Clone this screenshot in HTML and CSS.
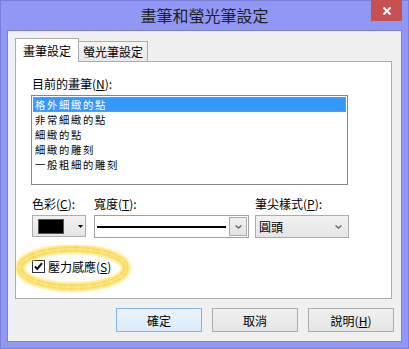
FILE: index.html
```html
<!DOCTYPE html>
<html lang="zh-TW">
<head>
  <meta charset="UTF-8">
  <title>畫筆和螢光筆設定</title>
  <link rel="stylesheet" href="styles.css">
</head>
<body>

  <div class="window">
    <div class="titlebar">
      <div class="title">畫筆和螢光筆設定</div>
      <div class="close">
        <svg width="10" height="8" viewBox="0 0 10 8">
          <path d="M1.5 0.5 L8.5 7.5 M8.5 0.5 L1.5 7.5" stroke="#fff" stroke-width="2"/>
        </svg>
      </div>
    </div>

    <div class="client">
      <div class="tabs">
        <div class="tab active">畫筆設定</div>
        <div class="tab">螢光筆設定</div>
      </div>

      <div class="pane">
        <div class="label">目前的畫筆(<u>N</u>):</div>
        <ul class="listbox">
          <li class="selected">格外細緻的點</li>
          <li>非常細緻的點</li>
          <li>細緻的點</li>
          <li>細緻的雕刻</li>
          <li>一般粗細的雕刻</li>
        </ul>

        <div class="options">
          <div class="field field-color">
            <div class="label">色彩(<u>C</u>):</div>
            <div class="color-btn">
              <span class="swatch"></span>
              <svg class="tri" width="5" height="3" viewBox="0 0 5 3"><path d="M0 0 H5 L2.5 3 Z" fill="#000"/></svg>
            </div>
          </div>
          <div class="field field-width">
            <div class="label">寬度(<u>T</u>):</div>
            <div class="combo">
              <div class="combo-value"><span class="line"></span></div>
              <div class="drop">
                <svg width="7" height="4" viewBox="0 0 7 4"><path d="M0.5 0.5 L3.5 3 L6.5 0.5" fill="none" stroke="#666" stroke-width="1.4"/></svg>
              </div>
            </div>
          </div>
          <div class="field field-tip">
            <div class="label">筆尖樣式(<u>P</u>):</div>
            <div class="select">
              <span>圓頭</span>
              <svg width="7" height="4" viewBox="0 0 7 4"><path d="M0.5 0.5 L3.5 3 L6.5 0.5" fill="none" stroke="#666" stroke-width="1.4"/></svg>
            </div>
          </div>
        </div>

        <div class="check">
          <span class="box">
            <svg width="11" height="11" viewBox="0 0 11 11"><path d="M2 5.5 L4.3 8 L9 2.2" fill="none" stroke="#111" stroke-width="2"/></svg>
          </span>
          <span>壓力感應(<u>S</u>)</span>
        </div>

        <!-- marca de marca-texto por cima -->
        <svg class="highlight" width="120" height="50" viewBox="0 0 120 50">
          <defs>
            <filter id="fuzz" x="-10%" y="-20%" width="120%" height="140%">
              <feGaussianBlur stdDeviation="1.2"/>
            </filter>
          </defs>
          <ellipse cx="57" cy="23" rx="53" ry="19" fill="none" stroke="#ffe680" stroke-width="9" filter="url(#fuzz)"/>
          <ellipse cx="57" cy="23" rx="53" ry="19" fill="none" stroke="#f8c410" stroke-width="3" stroke-dasharray="3 1 5 2" filter="url(#fuzz)"/>
          <ellipse cx="57" cy="23" rx="53" ry="19" fill="none" stroke="#fff2b0" stroke-width="2" opacity="0.6"/>
        </svg>
      </div>

      <div class="buttons">
        <button class="btn default">確定</button>
        <button class="btn">取消</button>
        <button class="btn">說明(<u>H</u>)</button>
      </div>
    </div>
  </div>

</body>
</html>
```

FILE: styles.css
```css
* {
  box-sizing: border-box;
}

body {
  margin: 0;
  font-family: "Noto Sans CJK TC", "Liberation Sans", sans-serif;
  font-size: 12px;
  color: #000;
}

.window {
  width: 409px;
  height: 349px;
  background-color: #9197f5;
  border: 1px solid #7b7fd6;
  padding: 0 6px 6px 6px;
  display: flex;
  flex-direction: column;
}

.titlebar {
  height: 29px;
  display: flex;
}

.title {
  flex: 1;
  padding-left: 31px;
  text-align: center;
  line-height: 29px;
  font-size: 16px;
  color: #222;
}

.close {
  width: 31px;
  height: 21px;
  margin-top: -1px;
  background-color: #c75050;
  display: flex;
  align-items: center;
  justify-content: center;
}

.client {
  flex: 1;
  background-color: #f0f0f0;
  border: 1px solid #7b80d8;
  padding: 7px 7px 9px 7px;
  display: flex;
  flex-direction: column;
}

.tabs {
  display: flex;
  align-items: flex-end;
  height: 23px;
}

.tab {
  height: 20px;
  width: 69px;
  border: 1px solid #acacac;
  border-bottom: none;
  border-left: none;
  background: linear-gradient(#f5f5f5, #e8e8e8);
  text-align: center;
  line-height: 20px;
}

.tab.active {
  position: relative;
  z-index: 1;
  width: 64px;
  height: 24px;
  margin-bottom: -1px;
  border-left: 1px solid #acacac;
  background: #fff;
  line-height: 23px;
}

.pane {
  position: relative;
  height: 238px;
  margin-right: 2px;
  background-color: #fff;
  border: 1px solid #acacac;
  padding: 14px 16px 0 15px;
}

.label {
  line-height: 15px;
  padding-left: 1px;
  white-space: nowrap;
}

.listbox {
  list-style: none;
  margin: 4px 0 0 0;
  width: 317px;
  height: 90px;
  border: 1px solid #828790;
  padding: 1px;
}

.listbox li {
  height: 15px;
  line-height: 15px;
  padding-left: 2px;
  font-size: 10.3px;
  letter-spacing: 1.7px;
}

.listbox li.selected {
  background-color: #3399ff;
  color: #fff;
  outline: 1px dotted #d98c3a;
  outline-offset: -1px;
}

.options {
  display: flex;
  margin-top: 11px;
  margin-left: 1px;
}

.field .label {
  padding-left: 0;
  margin-bottom: 4px;
}

.field-color {
  width: 54px;
}

.field-width {
  width: 155px;
  margin-left: 8px;
}

.field-tip {
  width: 94px;
  margin-left: 6px;
}

.color-btn {
  height: 22px;
  border: 1px solid #acacac;
  background: linear-gradient(#f2f2f2, #e5e5e5);
  display: flex;
  align-items: center;
  padding: 0 0 0 5px;
}

.swatch {
  width: 26px;
  height: 15px;
  background-color: #000;
  border: 1px solid #555;
}

.tri {
  margin-left: 14px;
}

.combo {
  height: 23px;
  border: 1px solid #a0a0a0;
  background-color: #fff;
  display: flex;
}

.combo-value {
  flex: 1;
  display: flex;
  align-items: center;
  padding: 0 2px 0 2px;
}

.line {
  flex: 1;
  height: 2px;
  background-color: #000;
}

.drop {
  width: 18px;
  margin: 1px;
  border: 1px solid #acacac;
  background: linear-gradient(#f0f0f0, #e3e3e3);
  display: flex;
  align-items: center;
  justify-content: center;
}

.select {
  height: 23px;
  border: 1px solid #acacac;
  background: linear-gradient(#f2f2f2, #e5e5e5);
  display: flex;
  align-items: center;
  justify-content: space-between;
  padding: 0 6px 0 3px;
}

.check {
  display: flex;
  align-items: center;
  margin-top: 21px;
  margin-left: 1px;
  line-height: 15px;
}

.box {
  width: 13px;
  height: 13px;
  border: 1px solid #333;
  background-color: #fff;
  margin-right: 3px;
  display: flex;
  align-items: center;
  justify-content: center;
}

.highlight {
  position: absolute;
  left: 0;
  top: 183px;
  pointer-events: none;
}

.buttons {
  display: flex;
  justify-content: flex-end;
  gap: 10px;
  margin-top: 9px;
}

.btn {
  width: 86px;
  height: 24px;
  font-family: inherit;
  font-size: 12px;
  color: #000;
  border: 1px solid #acacac;
  background: linear-gradient(#f0f0f0, #e5e5e5);
  padding: 0;
}

.btn.default {
  border-color: #7eb4ea;
  background: linear-gradient(#ecf4fc, #dcecfc);
}
```
